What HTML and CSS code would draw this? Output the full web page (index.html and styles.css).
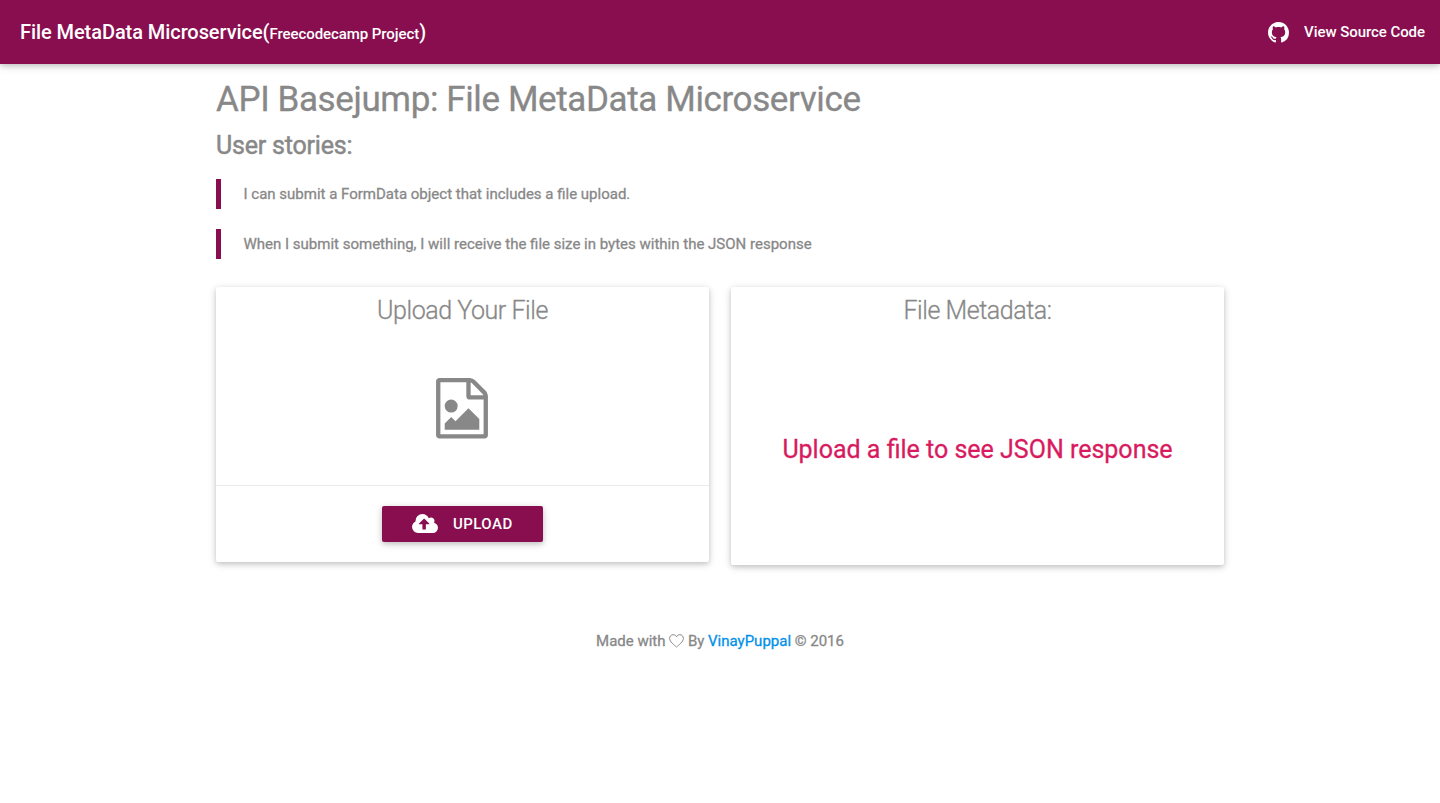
FILE: index.html
```html
<!DOCTYPE html>
<html lang="en">
<head>
<meta charset="utf-8">
<title>File MetaData Microservice</title>
<link rel="stylesheet" href="styles.css">
</head>
<body>
<nav class="navbar">
  <a class="brand"><span>File MetaData Microservice(</span><small>Freecodecamp Project</small><span>)</span></a>
  <a class="source">
    <svg class="github" viewBox="0 0 16 16"><path fill="currentColor" d="M8 0C3.58 0 0 3.58 0 8c0 3.54 2.29 6.53 5.47 7.59.4.07.55-.17.55-.38 0-.19-.01-.82-.01-1.49-2.01.37-2.53-.49-2.69-.94-.09-.23-.48-.94-.82-1.13-.28-.15-.68-.52-.01-.53.63-.01 1.08.58 1.23.82.72 1.21 1.87.87 2.33.66.07-.52.28-.87.51-1.07-1.78-.2-3.64-.89-3.64-3.95 0-.87.31-1.59.82-2.15-.08-.2-.36-1.02.08-2.12 0 0 .67-.21 2.2.82.64-.18 1.32-.27 2-.27s1.36.09 2 .27c1.53-1.04 2.2-.82 2.2-.82.44 1.1.16 1.92.08 2.12.51.56.82 1.27.82 2.15 0 3.07-1.87 3.75-3.65 3.95.29.25.54.73.54 1.48 0 1.07-.01 1.93-.01 2.2 0 .21.15.46.55.38A8.01 8.01 0 0 0 16 8c0-4.42-3.58-8-8-8z"/></svg>
    <span>View Source Code</span>
  </a>
</nav>
<main class="container">
  <h1 class="title">API Basejump: File MetaData Microservice</h1>
  <h2 class="subtitle">User stories:</h2>
  <blockquote class="story first"><span>I can submit a FormData object that includes a file upload.</span></blockquote>
  <blockquote class="story"><span>When I submit something, I will receive the file size in bytes within the JSON response</span></blockquote>
  <div class="cards">
    <section class="card upload-card">
      <h3 class="card-title"><span>Upload Your File</span></h3>
      <div class="preview">
        <svg class="file-icon" viewBox="0 0 1536 1792"><path fill="currentColor" d="M1468 380q28 28 48 76t20 88v1152q0 40-28 68t-68 28h-1344q-40 0-68-28t-28-68v-1600q0-40 28-68t68-28h896q40 0 88 20t76 48zm-444-244v376h376q-10-29-22-41l-313-313q-12-12-41-22zm384 1528v-1024h-416q-40 0-68-28t-28-68v-416h-768v1536h1280zm-128-448v320h-1024v-192l192-192 128 128 384-384zm-832-192q-80 0-136-56t-56-136 56-136 136-56 136 56 56 136-56 136-136 56z"/></svg>
      </div>
      <div class="action">
        <button class="btn">
          <svg class="cloud" viewBox="-64 128 1920 1408"><path fill="currentColor" d="M1216 864q0-14-9-23l-352-352q-9-9-23-9t-23 9l-351 351q-10 12-10 24 0 14 9 23t23 9h224v352q0 13 9.5 22.5t22.5 9.5h192q13 0 22.5-9.5t9.5-22.5v-352h224q13 0 22.5-9.5t9.5-22.5zm640 288q0 159-112.5 271.5t-271.5 112.5h-1088q-185 0-316.5-131.5t-131.5-316.5q0-130 70-240t188-165q-2-30-2-43 0-212 150-362t362-150q156 0 285.5 87t188.5 231q71-62 166-62 106 0 181 75t75 181q0 76-41 138 130 31 213.5 135.5t83.5 238.5z"/></svg>
          <span>UPLOAD</span>
        </button>
      </div>
    </section>
    <section class="card meta-card">
      <h3 class="card-title"><span>File Metadata:</span></h3>
      <p class="message"><span>Upload a file to see JSON response</span></p>
    </section>
  </div>
</main>
<footer class="footer">
  <span>Made with</span>
  <svg class="heart" viewBox="0 0 15 14"><path fill="none" stroke="currentColor" d="M7.5 13C5.3 11 .6 7.700.6 4.500.6 2.300 2.200.7 4.200.7 5.700.7 6.900 1.500 7.500 2.800 8.100 1.500 9.300.7 10.800.7 12.800.7 14.400 2.300 14.400 4.500 14.400 7.700 9.700 11 7.500 13z"/></svg>
  <span>By</span> <a class="link">VinayPuppal</a> <span>© 2016</span>
</footer>
</body>
</html>
```
FILE: styles.css
```css
* { box-sizing: border-box; }
body {
  margin: 0;
  font: 400 15px/22px Roboto, sans-serif;
  -webkit-text-stroke: .3px currentColor;
  color: #888;
  background: #fff;
}
h1, h2, h3, p, blockquote { margin: 0; }
svg { display: block; flex: none; }
.navbar {
  display: flex;
  justify-content: space-between;
  align-items: center;
  height: 64px;
  padding: 0 15px 0 20px;
  background: #880e4f;
  color: #fff;
  box-shadow: 0 2px 5px 0 rgba(0,0,0,.16), 0 2px 10px 0 rgba(0,0,0,.12);
}
.brand {
  padding-top: 1px;
  font-size: 20px;
  font-weight: 500;
  line-height: 64px;
  letter-spacing: -.07px;
  white-space: nowrap;
  -webkit-text-stroke: 0;
}
.brand small { font-size: 15px; }
.source {
  display: flex;
  align-items: center;
  font-weight: 500;
  letter-spacing: -.06px;
  -webkit-text-stroke: 0;
}
.github { width: 21px; height: 21px; margin-right: 15px; }
.container { width: 1008px; margin: 0 auto; }
.title {
  padding-top: 15px;
  font-size: 35px;
  line-height: 42px;
  font-weight: 400;
  letter-spacing: -.39px;
}
.subtitle {
  margin-top: 10px;
  font-size: 25px;
  line-height: 30px;
  font-weight: 400;
  letter-spacing: -.2px;
  -webkit-text-stroke-width: .5px;
}
.story {
  height: 30px;
  margin-top: 20px;
  padding-left: 22.5px;
  border-left: 5px solid #880e4f;
  line-height: 30px;
}
.first { margin-top: 18px; }
.cards {
  display: grid;
  grid-template-columns: 1fr 1fr;
  align-items: start;
  gap: 22px;
  margin-top: 28px;
}
.card {
  border-radius: 2px;
  background: #fff;
  text-align: center;
  box-shadow: 0 2px 5px 0 rgba(0,0,0,.16), 0 2px 10px 0 rgba(0,0,0,.12);
}
.upload-card { height: 275px; }
.meta-card { height: 278px; }
.card-title {
  height: 48px;
  font-size: 25px;
  line-height: 48px;
  font-weight: 300;
  letter-spacing: -.45px;
}
.preview { display: flex; justify-content: center; height: 150px; padding: 43px 1px 0 0; }
.file-icon { width: 52px; height: 60.5px; }
.action {
  display: flex;
  justify-content: center;
  padding-top: 20px;
  border-top: 1px solid rgba(160,160,160,.2);
}
.btn {
  display: flex;
  align-items: center;
  width: 161px;
  height: 36px;
  padding: 0 30px;
  border: 0;
  border-radius: 2px;
  background: #880e4f;
  color: #fff;
  font: 500 15px/36px Roboto, sans-serif;
  letter-spacing: .45px;
  -webkit-text-stroke: 0;
  box-shadow: 0 2px 5px 0 rgba(0,0,0,.16), 0 2px 10px 0 rgba(0,0,0,.12);
}
.cloud { width: 26px; height: 19px; margin: 0 15px 1px 0; }
.message {
  padding-top: 100px;
  font-size: 25px;
  line-height: 30px;
  font-weight: 400;
  color: #d81b60;
}
.footer {
  display: flex;
  justify-content: center;
  align-items: center;
  gap: 3.7px;
  margin-top: 65px;
}
.heart { width: 15px; height: 14px; }
.link { color: #0391e8; }
```
